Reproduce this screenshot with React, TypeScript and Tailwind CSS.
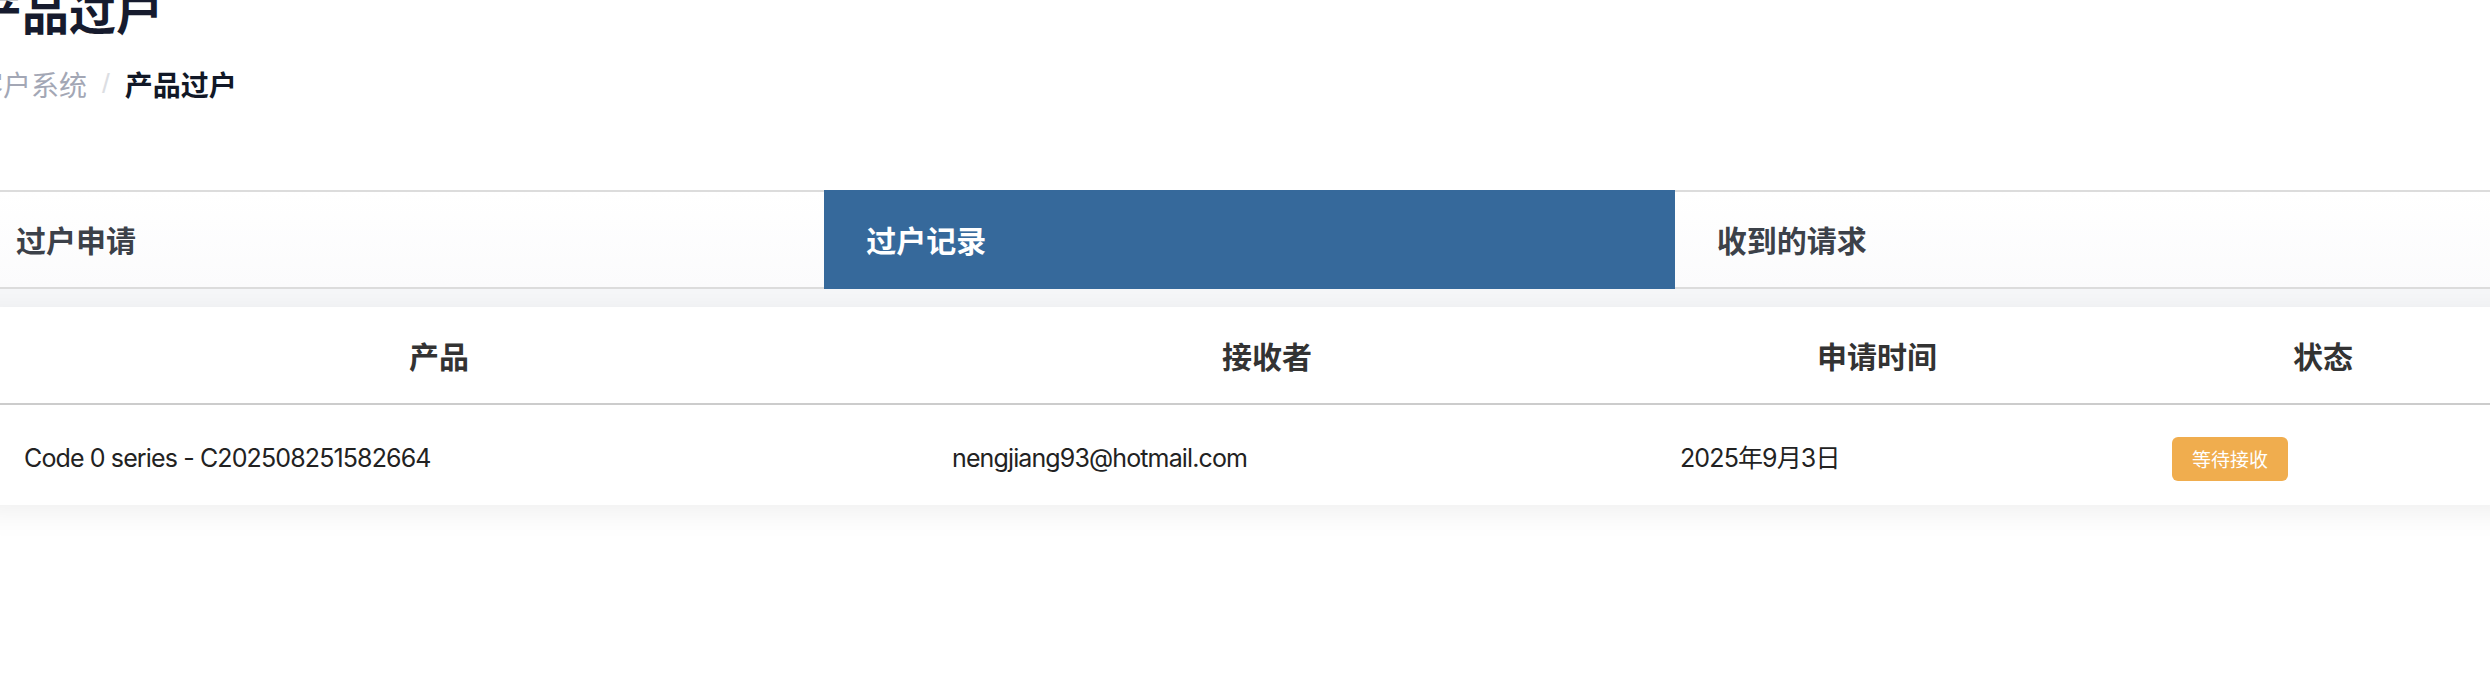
import * as React from "react";

const tabs = [
  { name: "过户申请", active: false },
  { name: "过户记录", active: true },
  { name: "收到的请求", active: false },
];

const rows = [
  {
    product: "Code 0 series - C202508251582664",
    receiver: "nengjiang93@hotmail.com",
    date: "2025年9月3日",
    status: "等待接收",
  },
];

const cjk = { fontFamily: '"Noto Sans CJK SC", "Noto Sans", sans-serif' };
const latin = { fontFamily: 'Inter, "Noto Sans CJK SC", sans-serif' };

const App = () => {
  return (
    <div className="w-full h-[674px] bg-white overflow-hidden" style={cjk}>
      <div className="-ml-[25px] w-[2550px]">
        <h1 className="-mt-[14px] text-[47px] leading-none font-bold text-[#161b2e]">
          产品过户
        </h1>
        <nav className="mt-[37px] flex items-center text-[28px] leading-none">
          <span className="text-[#a3a7b5]">客户系统</span>
          <span
            className="mx-[15px] text-[#dcdee3]"
            style={{ fontFamily: '"Liberation Sans", sans-serif' }}
          >
            /
          </span>
          <span className="font-bold text-[#111827]">产品过户</span>
        </nav>

        {/* tabs */}
        <div className="mt-[92px] -ml-px grid grid-cols-3">
          {tabs.map((tab) => (
            <div
              key={tab.name}
              className={
                tab.active
                  ? "flex h-[99px] items-center bg-[#36699b] pl-[42px] text-[30px] font-bold text-white"
                  : "flex h-[99px] items-center border-y-2 border-[#dcdcdc] bg-gradient-to-b from-white to-[#fbfbfc] pl-[42px] text-[30px] font-bold text-[#3c4149]"
              }
            >
              {tab.name}
            </div>
          ))}
        </div>

        {/* records table */}
        <div className="bg-[#f6f7f9] pt-[18px]">
          <div className="bg-white shadow-[0_6px_30px_rgba(0,0,0,0.07)]">
            <table className="w-[2548px] table-fixed border-collapse">
              <colgroup>
                <col className="w-[928px]" />
                <col className="w-[728px]" />
                <col className="w-[492px]" />
                <col className="w-[400px]" />
              </colgroup>
              <thead>
                <tr className="border-b-2 border-[#cccccc]">
                  {["产品", "接收者", "申请时间", "状态"].map((h) => (
                    <th
                      key={h}
                      className="h-[97px] text-center text-[30px] font-bold text-[#333333]"
                    >
                      {h}
                    </th>
                  ))}
                </tr>
              </thead>
              <tbody style={latin}>
                {rows.map((r) => (
                  <tr key={r.product}>
                    <td className="h-[101px] px-[49px] pt-[8px] text-[25px] tracking-[-0.035em] text-[#222222]">
                      {r.product}
                    </td>
                    <td className="px-[49px] pt-[8px] text-[25px] tracking-[-0.035em] text-[#222222]">
                      {r.receiver}
                    </td>
                    <td className="px-[49px] pt-[8px] text-[25px] tracking-[-0.035em] text-[#222222]">
                      {r.date}
                    </td>
                    <td className="px-[49px] pt-[8px]">
                      <span
                        className="inline-flex h-[44px] items-center rounded-[6px] bg-[#f0ad4e] px-[20px] text-[19px] text-white"
                        style={cjk}
                      >
                        {r.status}
                      </span>
                    </td>
                  </tr>
                ))}
              </tbody>
            </table>
          </div>
        </div>
      </div>
    </div>
  );
};

export default App;
